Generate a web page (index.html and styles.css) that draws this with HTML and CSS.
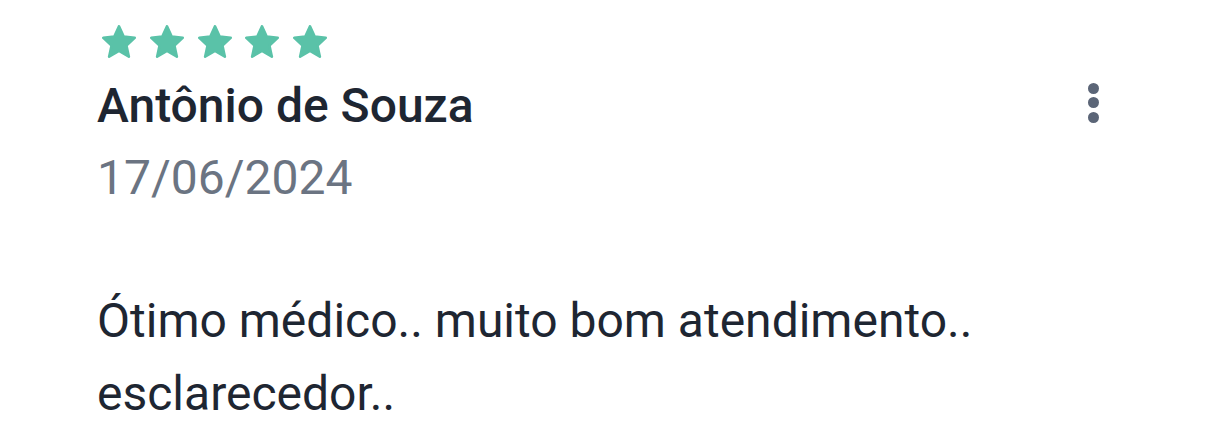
FILE: index.html
```html
<!DOCTYPE html>
<html lang="pt-BR">
<head>
<meta charset="utf-8">
<link rel="stylesheet" href="styles.css">
</head>
<body>
<div class="review">
  <div class="stars">
    <svg class="star" viewBox="1.5 1.4 21 19.8" preserveAspectRatio="none"><path d="M12 2.2l2.9 6.2 6.8.7-5.1 4.6 1.5 6.7L12 16.9l-6.1 3.5 1.5-6.7-5.1-4.6 6.8-.7z"/></svg>
    <svg class="star" viewBox="1.5 1.4 21 19.8" preserveAspectRatio="none"><path d="M12 2.2l2.9 6.2 6.8.7-5.1 4.6 1.5 6.7L12 16.9l-6.1 3.5 1.5-6.7-5.1-4.6 6.8-.7z"/></svg>
    <svg class="star" viewBox="1.5 1.4 21 19.8" preserveAspectRatio="none"><path d="M12 2.2l2.9 6.2 6.8.7-5.1 4.6 1.5 6.7L12 16.9l-6.1 3.5 1.5-6.7-5.1-4.6 6.8-.7z"/></svg>
    <svg class="star" viewBox="1.5 1.4 21 19.8" preserveAspectRatio="none"><path d="M12 2.2l2.9 6.2 6.8.7-5.1 4.6 1.5 6.7L12 16.9l-6.1 3.5 1.5-6.7-5.1-4.6 6.8-.7z"/></svg>
    <svg class="star" viewBox="1.5 1.4 21 19.8" preserveAspectRatio="none"><path d="M12 2.2l2.9 6.2 6.8.7-5.1 4.6 1.5 6.7L12 16.9l-6.1 3.5 1.5-6.7-5.1-4.6 6.8-.7z"/></svg>
  </div>
  <div class="head">
    <div class="who">
      <div class="name">Antônio de Souza</div>
      <div class="date">17/06/2024</div>
    </div>
    <button class="more" aria-label="Mais opções"><span></span><span></span><span></span></button>
  </div>
  <p class="text">Ótimo médico.. muito bom atendimento.. esclarecedor..</p>
</div>
</body>
</html>
```
FILE: styles.css
```css
html, body {
  margin: 0;
  padding: 0;
  background: #ffffff;
}
body {
  font-family: Roboto, "Noto Sans", sans-serif;
  width: 1220px;
  height: 442px;
  overflow: hidden;
}
.review {
  padding: 25px 121px 0 97px;
}
.stars {
  display: flex;
  gap: 13.75px;
  margin-left: 5px;
}
.star {
  display: block;
  width: 34px;
  height: 33px;
  fill: #5ac2a8;
  stroke: #5ac2a8;
  stroke-width: 1.6;
  stroke-linejoin: round;
}
.head {
  display: flex;
  justify-content: space-between;
  align-items: flex-start;
  margin-top: 19.5px;
}
.name {
  font-size: 48px;
  font-weight: 500;
  color: #1e2632;
  line-height: 56px;
}
.date {
  font-size: 48px;
  font-weight: 400;
  color: #6b7482;
  line-height: 56px;
  margin-top: 16px;
}
.more {
  border: 0;
  background: none;
  padding: 0;
  margin-top: 5px;
  display: flex;
  flex-direction: column;
  gap: 3.5px;
}
.more span {
  width: 11px;
  height: 11px;
  border-radius: 50%;
  background: #5b6577;
}
.text {
  margin: 78.5px 0 0;
  font-size: 48px;
  line-height: 73px;
  color: #1e2632;
  width: 900px;
}
```
